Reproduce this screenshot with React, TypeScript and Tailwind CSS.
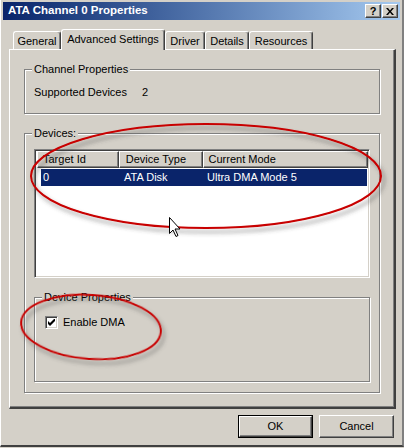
import React from "react";

const raised =
  "border-t border-l border-white border-r border-b border-r-[#404040] border-b-[#404040] shadow-[inset_-1px_-1px_0_#808080]";
const etched = "border border-[#808080] shadow-[inset_1px_1px_0_#fff,1px_1px_0_#fff]";

const TABS = [
  { label: "General", w: "w-[48px]" },
  { label: "Advanced Settings", w: "w-[104px]", active: true },
  { label: "Driver", w: "w-[40px]" },
  { label: "Details", w: "w-[44px]" },
  { label: "Resources", w: "w-[64px]" },
];

function Group({
  label,
  className,
  children,
}: {
  label: string;
  className: string;
  children?: React.ReactNode;
}) {
  return (
    <div className={`relative ${etched} ${className}`}>
      <span className="absolute -top-[8px] left-[7px] bg-[#D4D0C8] px-[2px] leading-[14px]">
        {label}
      </span>
      {children}
    </div>
  );
}

export default function App() {
  return (
    <div className="relative w-[404px] h-[448px] overflow-hidden bg-[#D4D0C8] font-['Liberation_Sans',Arial,sans-serif] text-[11px] text-black">
      {/* Window frame */}
      <div className="w-[404px] h-[447px] border-l border-l-white border-r-2 border-r-[#808080] border-b-2 border-b-[#404040] pt-[2px] px-[2px]">
        {/* Title bar */}
        <div className="flex items-center justify-between h-[18px] pl-[5px] pr-[2px] bg-gradient-to-r from-[#0A246A] to-[#A6CAF0]">
          <span className="text-white font-bold text-[11.5px] leading-none">
            ATA Channel 0 Properties
          </span>
          <div className="flex gap-[1px]">
            <div className={`w-[16px] h-[14px] bg-[#D4D0C8] flex items-center justify-center ${raised}`}>
              <span className="font-bold text-[11px] leading-none">?</span>
            </div>
            <div className={`w-[16px] h-[14px] bg-[#D4D0C8] flex items-center justify-center ${raised}`}>
              <svg width="8" height="7" viewBox="0 0 8 7">
                <path d="M0 0h2l2 2.5L6 0h2L5 3.5 8 7H6L4 4.5 2 7H0l3-3.5z" fill="#000" />
              </svg>
            </div>
          </div>
        </div>

        {/* Tabs */}
        <div className="flex items-end h-[20px] mt-[9px] pl-[8px]">
          {TABS.map((t) => (
            <div
              key={t.label}
              className={`${t.w} flex justify-center rounded-t-[3px] border-t border-l border-white border-r border-r-[#404040] shadow-[inset_-1px_0_0_#808080] ${
                t.active
                  ? "h-[21px] -mb-[1px] relative z-10 bg-[#D4D0C8] pt-[3px]"
                  : "h-[18px] pt-[3px]"
              } ${t.label === "General" ? "ml-[2px]" : ""}`}
            >
              <span className="leading-[13px]">{t.label}</span>
            </div>
          ))}
        </div>

        {/* Tab panel */}
        <div className="ml-[6px] w-[387px] h-[360px] border-t border-l border-white border-r-2 border-b-2 border-r-[#404040] border-b-[#404040] shadow-[inset_-1px_-1px_0_#808080] pl-[14px] pt-[19px]">
          <Group label="Channel Properties" className="w-[356px] h-[45px]">
            <div className="flex pt-[16px] pl-[9px] leading-[13px]">
              <span className="w-[108px]">Supported Devices</span>
              <span>2</span>
            </div>
          </Group>

          <Group label="Devices:" className="mt-[19px] w-[356px] h-[260px] pt-[15px] pl-[9px]">
            {/* List view */}
            <div className="w-[336px] h-[129px] bg-white border border-t-[#808080] border-l-[#808080] border-r-white border-b-white shadow-[inset_1px_1px_0_#404040,inset_-1px_-1px_0_#D4D0C8] p-[1px] pl-[2px]">
              <div className="flex h-[17px] bg-[#D4D0C8]">
                <div className={`w-[82px] pl-[5px] leading-[15px] ${raised}`}>Target Id</div>
                <div className={`w-[84px] pl-[6px] leading-[15px] ${raised}`}>Device Type</div>
                <div className={`w-[166px] pl-[5px] leading-[15px] ${raised}`}>Current Mode</div>
              </div>
              <div className="flex h-[17px] mt-[1px] ml-[4px] mr-[1px] bg-[#0A246A] text-white items-center leading-[13px]">
                <span className="w-[83px] pl-[2px]">0</span>
                <span className="w-[83px]">ATA Disk</span>
                <span>Ultra DMA Mode 5</span>
              </div>
            </div>

            <Group label="Device Properties" className="mt-[19px] w-[336px] h-[85px] pt-[18px] pl-[10px]">
              <div className="flex items-center gap-[5px]">
                <div className="w-[13px] h-[13px] bg-white border border-t-[#808080] border-l-[#808080] border-r-white border-b-white shadow-[inset_1px_1px_0_#404040,inset_-1px_-1px_0_#D4D0C8] flex items-center justify-center">
                  <svg width="7" height="7" viewBox="0 0 7 7">
                    <path d="M0 2v3l2 2 5-5V-1L2 4z" fill="#000" />
                  </svg>
                </div>
                <span className="leading-[13px]">Enable DMA</span>
              </div>
            </Group>
          </Group>
        </div>

        {/* Dialog buttons */}
        <div className="flex justify-end gap-[6px] mt-[6px] pr-[6px]">
          <div className="w-[75px] h-[23px] border border-black flex">
            <div className={`flex-1 flex items-center justify-center ${raised}`}>OK</div>
          </div>
          <div className={`w-[75px] h-[23px] flex items-center justify-center ${raised}`}>Cancel</div>
        </div>
      </div>

      {/* Annotation overlay: hand-drawn ellipses and mouse pointer */}
      <svg className="absolute inset-0 pointer-events-none" width="404" height="448" viewBox="0 0 404 448">
        <defs>
          <filter id="sh" x="-20%" y="-20%" width="140%" height="140%">
            <feDropShadow dx="3" dy="4" stdDeviation="2" floodColor="#444" floodOpacity="0.55" />
          </filter>
        </defs>
        <ellipse cx="206" cy="176" rx="175" ry="52" fill="none" stroke="#C80000" strokeWidth="2" filter="url(#sh)" />
        <ellipse
          cx="91"
          cy="327"
          rx="70"
          ry="32"
          fill="none"
          stroke="#C80000"
          strokeWidth="2"
          transform="rotate(4 91 327)"
          filter="url(#sh)"
        />
        <path
          d="M169.5 217.5v16l3.5-3.5 3 6.5 2-1-3-6.5h5z"
          fill="#fff"
          stroke="#000"
          strokeWidth="1"
          strokeLinejoin="miter"
        />
      </svg>
    </div>
  );
}
